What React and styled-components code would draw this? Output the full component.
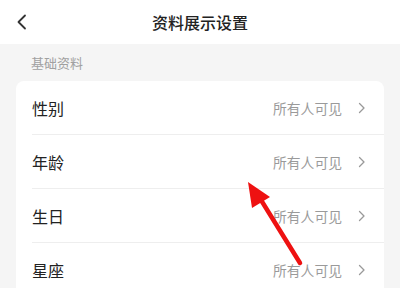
import React from "react"
import styled, { createGlobalStyle } from "styled-components"

const GlobalStyle = createGlobalStyle`
  html, body {
    margin: 0;
    padding: 0;
    background: #f5f5f5;
    font-family: "Noto Sans CJK SC", "Noto Sans", sans-serif;
  }
`

const Page = styled.div`
  position: relative;
  width: 400px;
  height: 288px;
  overflow: hidden;
  background: #f5f5f5;
`

const Header = styled.div`
  height: 44px;
  background: #fff;
  display: flex;
  align-items: center;
  justify-content: center;
  position: relative;
`

const Back = styled.div`
  position: absolute;
  left: 16px;
  top: 14px;
  width: 12px;
  height: 16px;
  display: flex;
`

const Title = styled.h1`
  margin: 0;
  font-size: 16px;
  font-weight: 500;
  color: #222;
`

const Section = styled.div`
  padding: 8px 16px 0;
`

const SectionLabel = styled.div`
  font-size: 13px;
  color: #a0a0a0;
  padding-left: 15px;
  height: 29px;
  line-height: 22px;
`

const Card = styled.div`
  background: #fff;
  border-radius: 8px;
  padding-left: 16px;
`

const Row = styled.div`
  height: 54px;
  display: flex;
  align-items: center;
  border-bottom: ${(p) => (p.last ? "none" : "1px solid #eeeeee")};
  box-sizing: border-box;
`

const Label = styled.div`
  flex: 1;
  font-size: 16px;
  color: #222;
`

const Value = styled.div`
  font-size: 13.8px;
  color: #9a9a9a;
  margin-right: 16px;
`

const Chevron = styled.div`
  width: 8px;
  height: 12px;
  margin-right: 18px;
  display: flex;
`

const Arrow = styled.svg`
  position: absolute;
  left: 0;
  top: 0;
  pointer-events: none;
`

const rows = ["性别", "年龄", "生日", "星座"]

export default function App() {
  return (
    <Page>
      <GlobalStyle />
      <Header>
        <Back>
          <svg width="12" height="16" viewBox="0 0 12 16">
            <path d="M9 1.5 L2.5 8 L9 14.5" fill="none" stroke="#333" strokeWidth="1.8" strokeLinecap="round" strokeLinejoin="round" />
          </svg>
        </Back>
        <Title>资料展示设置</Title>
      </Header>
      <Section>
        <SectionLabel>基础资料</SectionLabel>
        <Card>
          {rows.map((r, i) => (
            <Row key={r} last={i === rows.length - 1}>
              <Label>{r}</Label>
              <Value>所有人可见</Value>
              <Chevron>
                <svg width="8" height="12" viewBox="0 0 8 12">
                  <path d="M1.5 1.5 L6 6 L1.5 10.5" fill="none" stroke="#999" strokeWidth="1.3" strokeLinecap="round" strokeLinejoin="round" />
                </svg>
              </Chevron>
            </Row>
          ))}
        </Card>
      </Section>
      <Arrow width="400" height="288" viewBox="0 0 400 288">
        <line x1="300" y1="263" x2="261" y2="200" stroke="#ee1111" strokeWidth="4.5" strokeLinecap="round" />
        <polygon points="248,182 252,208 270,197" fill="#ee1111" />
      </Arrow>
    </Page>
  )
}
